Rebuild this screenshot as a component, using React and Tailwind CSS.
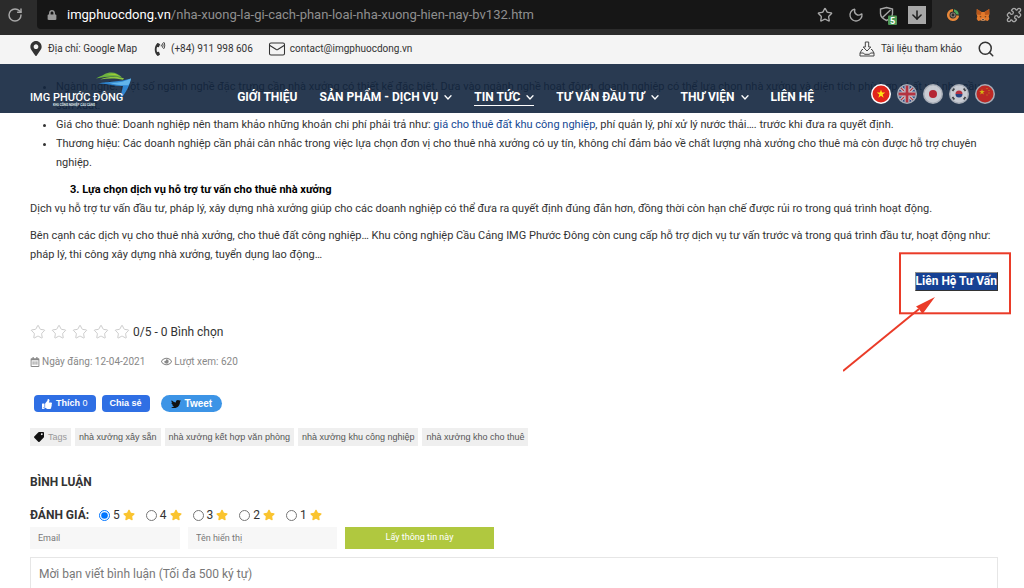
import { FaMapMarkerAlt, FaPhoneVolume, FaStar, FaTwitter, FaTag, FaThumbsUp, FaRegCalendarAlt, FaRegEye, FaLock } from "react-icons/fa";
import { Mail, Moon, Puzzle, RotateCw, Search, Star, ArrowDown } from "lucide-react";

const NAV = [
  { label: "GIỚI THIỆU" },
  { label: "SẢN PHẨM - DỊCH VỤ", menu: true },
  { label: "TIN TỨC", menu: true, active: true },
  { label: "TƯ VẤN ĐẦU TƯ", menu: true },
  { label: "THƯ VIỆN", menu: true },
  { label: "LIÊN HỆ" },
];

const TAGS = ["nhà xưởng xây sẵn", "nhà xưởng kết hợp văn phòng", "nhà xưởng khu công nghiệp", "nhà xưởng kho cho thuê"];

const STAR = "M0 -1 L.225 -.309 L.951 -.309 L.363 .118 L.588 .809 L0 .382 L-.588 .809 L-.363 .118 L-.951 -.309 L-.225 -.309 Z";

function Shield() {
  return (
    <svg viewBox="0 0 18 20" className="h-5 w-[18px]" fill="none">
      <path d="M7.500 2.500 13.500 4v4.500c0 3.500-3 5.700-6 7C4.500 14.200 1.500 12 1.500 8.500V4Z" stroke="#a8a8a8" strokeWidth="1.400" />
      <path d="M11.500 5 3.500 12.500" stroke="#a8a8a8" strokeWidth="1.400" />
      <rect x="9" y="10.500" width="9" height="9.500" rx="1" fill="#4f9a57" />
      <text x="13.500" y="18.500" textAnchor="middle" fontSize="9" fontWeight="700" fill="#fff">5</text>
    </svg>
  );
}

function Ring() {
  return (
    <svg viewBox="0 0 14 14" className="size-3.5" fill="none">
      <path d="M7 2.200A4.800 4.800 0 1 0 11.800 7.500" stroke="#e8883a" strokeWidth="2.600" />
      <path d="M8 1.200a6 6 0 0 1 4.800 5.300l-2.600-.2A3.500 3.500 0 0 0 8 3.800Z" fill="#4fa65a" />
      <circle cx="7" cy="7" r="2" stroke="#8b7d74" strokeWidth="1.200" />
    </svg>
  );
}

function Fox() {
  return (
    <svg viewBox="0 0 14 14" className="size-3.5">
      <path d="M.8 1 5.500 4h3L13.200 1l.3 5-.8 2.500.6 2.500-1.500 2-3-.8-.8.8H6l-.8-.8-3 .8L.7 11l.6-2.500L.5 6Z" fill="#e27a2c" />
      <path d="M.8 1 5.500 4 4.800 7 1 6.500ZM13.200 1 8.500 4l.7 3 3.800-.5Z" fill="#b9581c" />
      <path d="M5.800 10.800h2.400l.4 1.700H5.400Z" fill="#d9c3ae" />
      <path d="m3.500 8 2 .8-.8.6ZM10.500 8l-2 .8.8.6Z" fill="#33241c" />
      <path d="M6 11.300h2l.2.900H5.800Z" fill="#33241c" />
    </svg>
  );
}

function TrayIcon() {
  return (
    <svg viewBox="0 0 16 16" className="size-4" fill="none" stroke="#444" strokeWidth="1" strokeLinejoin="round">
      <path d="M6.300 1h3.400v5h2.100L8 10 4.200 6h2.100Z" />
      <path d="M4 8.500H3L1 12v3h14v-3l-2-3.500h-1M1 12h3.500l1 1.300h5l1-1.300H15" />
    </svg>
  );
}

function Chevron() {
  return (
    <svg viewBox="0 0 8 5" className="h-[5px] w-2" fill="none" stroke="currentColor" strokeWidth="1.300" strokeLinecap="round">
      <path d="M1 .8 4 4 7 .8" />
    </svg>
  );
}

function Logo() {
  return (
    <svg viewBox="0 0 104 40" className="h-10 w-[104px]" role="img" aria-label="IMG Phước Đông">
      <path d="M66 11.500c3-1.800 6-2.600 8-4C81 3.500 88 6 92 10.500 84 8.500 75 10 66 11.500Z" fill="#6db33f" />
      <path d="M70 12.500c8-3.500 17-3.600 24-1.200l-1 1.500c-8-2-15-1.700-23-.3Z" fill="#8cc63f" />
      <path d="M77 7.500c4-1.500 9-1 12 1.500-4-1.300-8-1.600-12-1.500Z" fill="#b5d334" />
      <path d="M68 16.500c10-2 22-1.700 33-5-1 6-4 12-8 17.500l-3 3c1-4 2-9 3-13-8 .5-16-3-25-2.500Z" fill="#2f86d1" />
      <path d="M78 15.500c8 .8 16-.5 23-4-.5 2.500-1.300 4.500-2.500 6.800C92 18.500 85 18 78 15.500Z" fill="#62b5ea" />
      <text x="0" y="34" fontFamily="Roboto, sans-serif" fontSize="11" fontWeight="500" fill="#fff">IMG PHƯỚC ĐÔNG</text>
      <text x="23" y="39" fontFamily="Roboto, sans-serif" fontSize="3" fontWeight="700" fill="#dfe5ec">KHU CÔNG NGHIỆP CẦU CẢNG</text>
    </svg>
  );
}

function Flag({ name, active, children }) {
  return (
    <a href="#lang" aria-label={name} className={active ? "" : "opacity-80"}>
      <svg viewBox="-10 -10 20 20" className="size-5">
        <defs>
          <clipPath id={"flag-" + name}><circle r="8.500" /></clipPath>
        </defs>
        <circle r="10" fill={active ? "#fff" : "#c9ccd2"} />
        <g clipPath={"url(#flag-" + name + ")"}>{children}</g>
      </svg>
    </a>
  );
}

function Flags() {
  return (
    <div className="flex items-center gap-1.5">
      <Flag name="vn" active>
        <rect x="-10" y="-10" width="20" height="20" fill="#e1251b" />
        <path d={STAR} transform="scale(4.500)" fill="#ffe512" />
      </Flag>
      <Flag name="gb">
        <rect x="-10" y="-10" width="20" height="20" fill="#2e4a8c" />
        <path d="M-10-10 10 10M10-10-10 10" stroke="#e9e9ee" strokeWidth="3.400" />
        <path d="M-10-10 10 10M10-10-10 10" stroke="#d33" strokeWidth="1.200" />
        <path d="M0-10V10M-10 0H10" stroke="#e9e9ee" strokeWidth="5" />
        <path d="M0-10V10M-10 0H10" stroke="#d6323c" strokeWidth="2.800" />
      </Flag>
      <Flag name="jp">
        <rect x="-10" y="-10" width="20" height="20" fill="#f1f1f4" />
        <circle r="4" fill="#d8202c" />
      </Flag>
      <Flag name="kr">
        <rect x="-10" y="-10" width="20" height="20" fill="#f1f1f4" />
        <path d="M-3.500 0a3.500 3.500 0 0 1 7 0Z" fill="#d8303c" />
        <path d="M-3.500 0a3.500 3.500 0 0 0 7 0Z" fill="#28458c" />
        <path d="m-6.500-3 1.800-2.600M6.500-3 4.700-5.600M-6.500 3l1.800 2.600M6.500 3 4.700 5.600" stroke="#444" strokeWidth="1.800" />
      </Flag>
      <Flag name="cn">
        <rect x="-10" y="-10" width="20" height="20" fill="#e1251b" />
        <path d={STAR} transform="translate(-3 -2) scale(3)" fill="#ffd500" />
        <path d="M1.500-5.500h1M3.500-3.500h1M3.500-1h1M1.500 1h1" stroke="#f0a800" strokeWidth="1" />
      </Flag>
    </div>
  );
}

function BrowserBar() {
  return (
    <div className="flex h-[35px] items-start bg-[#2b2b2b] text-[#a8a8a8]">
      <button aria-label="Reload" className="flex h-[29px] w-[37px] shrink-0 items-center pl-[7px]">
        <RotateCw size={16} strokeWidth={2.2} />
      </button>
      <div className="flex h-[29px] min-w-0 flex-1 items-center rounded-b bg-[#161616] pr-1.5 pl-2.5">
        <FaLock size={10} className="mr-2.5 shrink-0 text-[#999]" />
        <span className="truncate text-[13px] leading-4 text-[#8f8f8f]">
          <span className="text-white">imgphuocdong.vn</span>/nha-xuong-la-gi-cach-phan-loai-nha-xuong-hien-nay-bv132.htm
        </span>
        <div className="ml-auto flex shrink-0 items-center gap-[15px]">
          <Star size={16} strokeWidth={2} />
          <Moon size={16} strokeWidth={2} className="-rotate-12" />
          <Shield />
          <span className="-ml-1 flex size-[18px] items-center justify-center bg-[#a6a6a6] text-[#1c1c1c]">
            <ArrowDown size={14} strokeWidth={2.6} />
          </span>
        </div>
      </div>
      <div className="flex h-[29px] shrink-0 items-center gap-4 pr-0.5 pl-3.5">
        <Ring />
        <Fox />
        <Puzzle size={16} strokeWidth={2} />
      </div>
    </div>
  );
}

function ContactBar() {
  return (
    <div className="flex h-[29px] items-center bg-[#f4f4f4] pr-[29px] pb-0.5 pl-[30px] text-[10px] leading-4 text-[#333]">
      <a href="#map" className="flex items-center gap-1.5">
        <FaMapMarkerAlt size={15} className="w-3" />
        Địa chỉ: Google Map
      </a>
      <a href="tel:+84911998606" className="ml-4 flex items-center gap-1">
        <FaPhoneVolume size={14} />
        (+84) 911 998 606
      </a>
      <a href="mailto:contact@imgphuocdong.vn" className="ml-[15px] flex items-center gap-1">
        <Mail size={18} strokeWidth={1.4} />
        contact@imgphuocdong.vn
      </a>
      <a href="#docs" className="ml-auto flex items-center gap-1.5">
        <TrayIcon />
        Tài liệu tham khảo
      </a>
      <button aria-label="Tìm kiếm" className="ml-[15px]">
        <Search size={18} strokeWidth={2} />
      </button>
    </div>
  );
}

function MainNav() {
  return (
    <nav className="absolute inset-x-0 top-0 z-10 flex h-[49px] items-end bg-[rgba(18,37,62,0.9)] pr-[29px] pl-[30px] text-white">
      <a href="#home" className="mb-1.5"><Logo /></a>
      <ul className="ml-auto flex gap-[22px] pb-[7px] text-[12px] leading-4 font-bold">
        {NAV.map((n) => (
          <li key={n.label}>
            <a href="#menu" className={"flex items-center gap-1.5 whitespace-nowrap border-b " + (n.active ? "border-white" : "border-transparent")}>
              {n.label}
              {n.menu && <Chevron />}
            </a>
          </li>
        ))}
      </ul>
      <div className="ml-[57px] pb-[9px]"><Flags /></div>
    </nav>
  );
}

function ContactCall() {
  return (
    <div className="mt-2 flex justify-end">
      <div className="relative">
        <button className="block h-[19px] border border-t-[#8d8d8d] border-r-[#333] border-b-[#333] border-l-[#8d8d8d] bg-[#164194] text-[12px] leading-[17px] font-bold whitespace-nowrap text-white">
          Liên Hệ Tư Vấn
        </button>
        <svg viewBox="0 0 168 120" className="pointer-events-none absolute -top-5 -right-[13px] h-[120px] w-[168px] max-w-none">
          <rect x="57" y="1.300" width="110" height="60" fill="none" stroke="#ea3b28" strokeWidth="2" />
          <path d="M0 119 76 57" stroke="#ea3b28" strokeWidth="2" />
          <path d="M92 45 73 54.500l3 2.500 3.500 5Z" fill="#ea3b28" />
        </svg>
      </div>
    </div>
  );
}

export default function App() {
  return (
    <div className="h-screen overflow-hidden bg-white font-[Roboto,'Liberation_Sans',sans-serif] text-[#333]">
      <BrowserBar />
      <ContactBar />
      <div className="relative">
        <MainNav />
        <main className="pt-[13px] pr-[26px] pl-[30px]">
          <article className="text-[11px] leading-[19px]">
            <ul className="list-disc pl-[26px]">
              <li>Ngành nghề: Một số ngành nghề đặc trưng cần nhà xưởng có thiết kế đặc biệt. Dựa vào ngành nghề hoạt động, doanh nghiệp có thể lựa chọn nhà xưởng và diện tích phù hợp nhất với nhu cầu<br />sản xuất.</li>
              <li>
                Giá cho thuê: Doanh nghiệp nên tham khảo những khoản chi phí phải trả như: <a href="#rent" className="text-[#164a94]">giá cho thuê đất khu công nghiệp</a>, phí quản lý, phí xử lý nước thải…. trước khi đưa ra quyết định.
              </li>
              <li>Thương hiệu: Các doanh nghiệp cần phải cân nhắc trong việc lựa chọn đơn vị cho thuê nhà xưởng có uy tín, không chỉ đảm bảo về chất lượng nhà xưởng cho thuê mà còn được hỗ trợ chuyên nghiệp.</li>
            </ul>
            <h3 className="mt-2 pl-10 font-bold text-black">3. Lựa chọn dịch vụ hỗ trợ tư vấn cho thuê nhà xưởng</h3>
            <p>Dịch vụ hỗ trợ tư vấn đầu tư, pháp lý, xây dựng nhà xưởng giúp cho các doanh nghiệp có thể đưa ra quyết định đúng đắn hơn, đồng thời còn hạn chế được rủi ro trong quá trình hoạt động.</p>
            <p className="mt-2">Bên cạnh các dịch vụ cho thuê nhà xưởng, cho thuê đất công nghiệp… Khu công nghiệp Cầu Cảng IMG Phước Đông còn cung cấp hỗ trợ dịch vụ tư vấn trước và trong quá trình đầu tư, hoạt động như: pháp lý, thi công xây dựng nhà xưởng, tuyển dụng lao động…</p>
            <ContactCall />
          </article>

          <div className="mt-[31px] flex h-5 items-center gap-[5px] text-[12px] leading-5">
            {[1, 2, 3, 4, 5].map((n) => (
              <button key={n} aria-label={n + " sao"}>
                <Star size={16} strokeWidth={1.3} color="#c4c4c4" />
              </button>
            ))}
            <span className="-ml-0.5">0/5 - 0 Bình chọn</span>
          </div>

          <div className="mt-2.5 flex items-center gap-4 text-[10px] leading-[19px] text-[#888]">
            <span className="flex items-center gap-0.5"><FaRegCalendarAlt size={10} />Ngày đăng: 12-04-2021</span>
            <span className="flex items-center gap-0.5"><FaRegEye size={11} />Lượt xem: 620</span>
          </div>

          <div className="mt-6 flex gap-1.5 pl-1 font-['Liberation_Sans',sans-serif] text-[9px] leading-[17px] font-bold text-white">
            <button className="flex h-[17px] items-center gap-1 rounded-sm bg-[#2f6fe4] px-2">
              <FaThumbsUp size={10} />
              <span>Thích <span className="font-normal">0</span></span>
            </button>
            <button className="h-[17px] rounded-sm bg-[#2f6fe4] px-2">Chia sẻ</button>
            <button className="ml-[5px] flex h-[17px] items-center gap-1 rounded-full bg-[#3c94e6] px-2.5 text-[10px]">
              <FaTwitter size={10} color="#111" />
              Tweet
            </button>
          </div>

          <div className="mt-4 flex gap-1 font-['Liberation_Sans',sans-serif] text-[9px] leading-[18px] text-[#555]">
            <span className="flex items-center gap-1 bg-[#efefef] px-1 text-[#999]">
              <FaTag size={10} color="#111" className="-scale-x-100" />
              Tags
            </span>
            {TAGS.map((t) => (
              <a key={t} href="#tag" className="bg-[#efefef] px-1">{t}</a>
            ))}
          </div>

          <form>
            <h2 className="mt-[26px] text-[12px] leading-5 font-bold">BÌNH LUẬN</h2>
            <fieldset className="mt-[13px] flex items-center text-[12px] leading-5">
              <span className="mr-2.5 font-bold">ĐÁNH GIÁ:</span>
              <span className="flex gap-[11px]">
                {[5, 4, 3, 2, 1].map((n) => (
                  <label key={n} className="flex items-center gap-[3px]">
                    <input type="radio" name="rating" value={n} defaultChecked={n === 5} className="size-[11px]" />
                    {n}
                    <FaStar size={12} color="#fac42f" />
                  </label>
                ))}
              </span>
            </fieldset>
            <div className="mt-0.5 flex gap-2">
              <input type="email" aria-label="Email" placeholder="Email" className="h-[22px] w-[150px] bg-[#f7f7f7] px-2 text-[9px] placeholder:text-[#777]" />
              <input type="text" aria-label="Tên hiển thị" placeholder="Tên hiển thị" className="h-[22px] w-[149px] bg-[#f7f7f7] px-2 text-[9px] placeholder:text-[#777]" />
              <button type="button" className="h-[22px] w-[149px] bg-[#b0c83f] text-[9px] text-white">Lấy thông tin này</button>
            </div>
            <textarea aria-label="Bình luận" placeholder="Mời bạn viết bình luận (Tối đa 500 ký tự)" className="mt-2 block h-20 w-full resize-none border border-[#e6e6e6] px-2 py-1.5 text-[12px] leading-5 placeholder:text-[#777]" />
          </form>
        </main>
      </div>
    </div>
  );
}
